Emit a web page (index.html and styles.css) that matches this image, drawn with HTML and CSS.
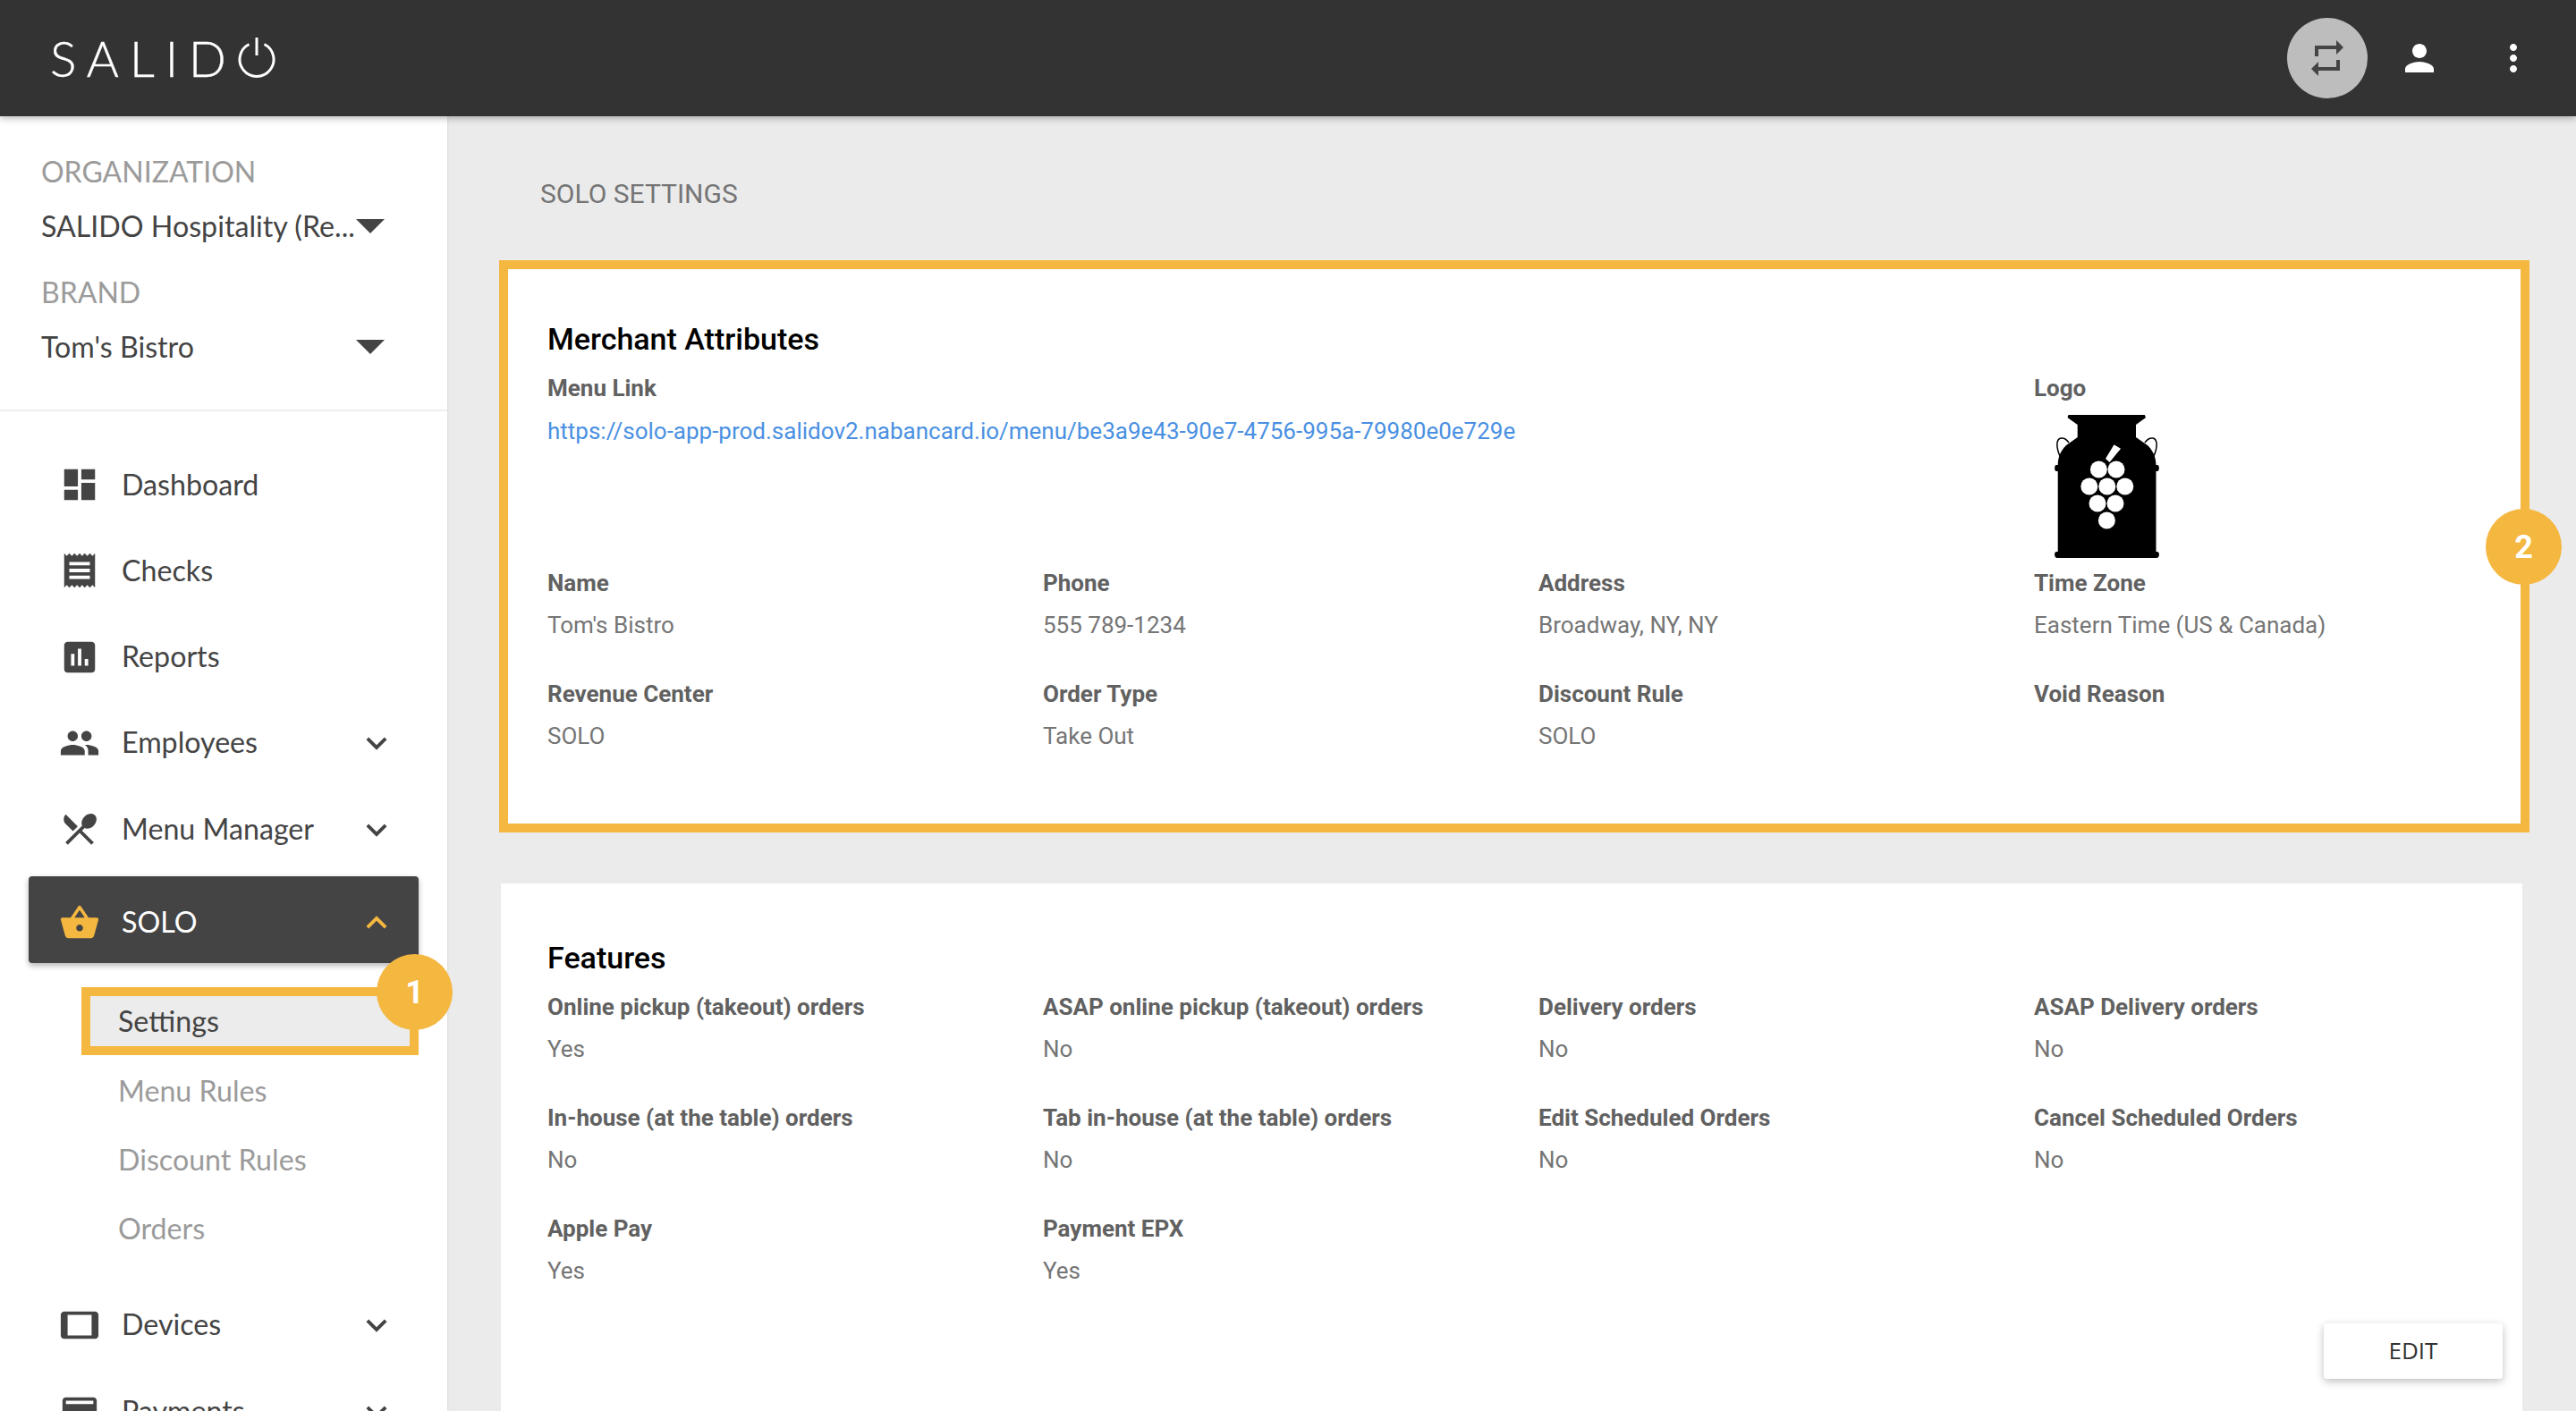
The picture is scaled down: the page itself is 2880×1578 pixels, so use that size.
FILE: index.html
```html
<!DOCTYPE html>
<html lang="en">
<head>
  <meta charset="UTF-8" />
  <meta name="viewport" content="width=device-width, initial-scale=1.0" />
  <title>SALIDO - Solo Settings</title>
  <link rel="stylesheet" href="styles.css">
</head>
<body>
<svg class="sprite" aria-hidden="true">
  <symbol id="i-chevron" viewBox="0 0 24 24"><path d="M16.59 8.59L12 13.17 7.41 8.59 6 10l6 6 6-6z"/></symbol>
</svg>
<header class="topbar">
  <div class="brand-logo">
    <span>SALID</span>
    <svg class="brand-power" viewBox="0 0 44 50"><path d="M13.500 11.500a19 19 0 1 0 17 0" fill="none" stroke="#fff" stroke-width="3"/><path d="M22 4v20" stroke="#fff" stroke-width="3"/></svg>
  </div>
  <div class="top-actions">
    <button class="top-btn swap"><svg viewBox="0 0 24 24"><path d="M7 7h10v3l4-4-4-4v3H5v6h2V7zm10 10H7v-3l-4 4 4 4v-3h12v-6h-2v4z"/></svg></button>
    <button class="top-btn"><svg viewBox="0 0 24 24"><path d="M12 12c2.21 0 4-1.79 4-4s-1.79-4-4-4-4 1.79-4 4 1.79 4 4 4zm0 2c-2.67 0-8 1.34-8 4v2h16v-2c0-2.66-5.33-4-8-4z"/></svg></button>
    <button class="top-btn more"><svg viewBox="0 0 24 24"><path d="M12 8c1.1 0 2-.9 2-2s-.9-2-2-2-2 .9-2 2 .9 2 2 2zm0 2c-1.1 0-2 .9-2 2s.9 2 2 2 2-.9 2-2-.9-2-2-2zm0 6c-1.1 0-2 .9-2 2s.9 2 2 2 2-.9 2-2-.9-2-2-2z"/></svg></button>
  </div>
</header>
<div class="layout">
  <aside class="sidebar">
    <div class="selectors">
      <div class="sel-label">ORGANIZATION</div>
      <div class="sel-value"><span>SALIDO Hospitality (Re...</span><i class="caret"></i></div>
      <div class="sel-label">BRAND</div>
      <div class="sel-value"><span>Tom's Bistro</span><i class="caret"></i></div>
    </div>
    <nav class="nav">
      <a class="nav-row"><svg class="nav-icon" viewBox="0 0 24 24"><path d="M3 13h8V3H3v10zm0 8h8v-6H3v6zm10 0h8V11h-8v10zm0-18v6h8V3h-8z"/></svg>Dashboard</a>
      <a class="nav-row"><svg class="nav-icon" viewBox="0 0 24 24"><path d="M18 17H6v-2h12v2zm0-4H6v-2h12v2zm0-4H6V7h12v2zM3 22l1.5-1.5L6 22l1.5-1.5L9 22l1.5-1.5L12 22l1.5-1.5L15 22l1.5-1.5L18 22l1.5-1.5L21 22V2l-1.5 1.5L18 2l-1.5 1.5L15 2l-1.5 1.5L12 2l-1.5 1.5L9 2 7.5 3.5 6 2 4.5 3.5 3 2v20z"/></svg>Checks</a>
      <a class="nav-row"><svg class="nav-icon" viewBox="0 0 24 24"><path d="M19 3H5c-1.1 0-2 .9-2 2v14c0 1.1.9 2 2 2h14c1.1 0 2-.9 2-2V5c0-1.1-.9-2-2-2zM9 17H7v-7h2v7zm4 0h-2V7h2v10zm4 0h-2v-4h2v4z"/></svg>Reports</a>
      <a class="nav-row"><svg class="nav-icon" viewBox="0 0 24 24"><path d="M16 11c1.66 0 2.99-1.34 2.99-3S17.66 5 16 5c-1.66 0-3 1.34-3 3s1.34 3 3 3zm-8 0c1.66 0 2.99-1.34 2.99-3S9.66 5 8 5C6.34 5 5 6.34 5 8s1.34 3 3 3zm0 2c-2.33 0-7 1.17-7 3.5V19h14v-2.5c0-2.33-4.67-3.5-7-3.5zm8 0c-.29 0-.62.02-.97.05 1.16.84 1.97 1.97 1.97 3.45V19h6v-2.5c0-2.33-4.67-3.5-7-3.5z"/></svg>Employees<svg class="chevron"><use href="#i-chevron"/></svg></a>
      <a class="nav-row"><svg class="nav-icon" viewBox="0 0 24 24"><path d="M8.1 13.34l2.83-2.83L3.91 3.5c-1.56 1.56-1.56 4.09 0 5.66l4.19 4.18zm6.78-1.81c1.53.71 3.68.21 5.27-1.38 1.91-1.91 2.28-4.65.81-6.12-1.46-1.46-4.2-1.1-6.12.81-1.59 1.59-2.09 3.74-1.38 5.27L3.7 19.87l1.41 1.41L12 14.41l6.88 6.88 1.41-1.41L13.41 13l1.47-1.47z"/></svg>Menu Manager<svg class="chevron"><use href="#i-chevron"/></svg></a>
      <a class="nav-row active"><svg class="nav-icon" viewBox="0 0 24 24"><path d="M17.21 9l-4.38-6.56c-.19-.28-.51-.42-.83-.42-.32 0-.64.14-.83.43L6.79 9H2c-.55 0-1 .45-1 1 0 .09.01.18.04.27l2.54 9.27c.23.84 1 1.46 1.92 1.46h13c.92 0 1.69-.62 1.93-1.46l2.54-9.27L23 10c0-.55-.45-1-1-1h-4.79zM9 9l3-4.4L15 9H9zm3 8c-1.1 0-2-.9-2-2s.9-2 2-2 2 .9 2 2-.9 2-2 2z"/></svg>SOLO<svg class="chevron up"><use href="#i-chevron"/></svg></a>
      <div class="subnav">
        <a class="sub-row current">Settings<span class="badge badge-one">1</span></a>
        <a class="sub-row">Menu Rules</a>
        <a class="sub-row">Discount Rules</a>
        <a class="sub-row">Orders</a>
      </div>
      <a class="nav-row"><svg class="nav-icon" viewBox="0 0 24 24"><path d="M21 4H3c-1.1 0-2 .9-2 2v12c0 1.1.89 2 2 2h18c1.1 0 1.99-.9 1.99-2L23 6c0-1.1-.9-2-2-2zm-2 14H5V6h14v12z"/></svg>Devices<svg class="chevron"><use href="#i-chevron"/></svg></a>
      <a class="nav-row"><svg class="nav-icon" viewBox="0 0 24 24"><path d="M20 4H4c-1.11 0-1.99.89-1.99 2L2 18c0 1.11.89 2 2 2h16c1.11 0 2-.89 2-2V6c0-1.11-.89-2-2-2zm0 14H4v-6h16v6zm0-10H4V6h16v2z"/></svg>Payments<svg class="chevron"><use href="#i-chevron"/></svg></a>
    </nav>
  </aside>
  <main class="main">
    <h1 class="page-title">SOLO SETTINGS</h1>
    <section class="card highlighted">
      <span class="badge badge-two">2</span>
      <h2>Merchant Attributes</h2>
      <div class="fields">
        <div class="field tall wide">
          <div class="label">Menu Link</div>
          <a class="value link">https://solo-app-prod.salidov2.nabancard.io/menu/be3a9e43-90e7-4756-995a-79980e0e729e</a>
        </div>
        <div class="field tall">
          <div class="label">Logo</div>
          <svg class="merchant-logo" viewBox="0 0 117 160">
            <path class="handle" d="M7 48C1 36 2 27 7 26c4-.5 7 2 9 5M110 48c6-12 5-21 0-22-4-.5-7 2-9 5"/>
            <path d="M15.500 0H100.800L102 3 91 11V25L104 34C110 40 113 46 113.500 56H115C117.500 56 117.500 63 115 63H113.500V153H115C117.500 153 118 160 114 160H3C-1 160 -.5 153 2 153H3.700V63H2C-.5 63-.5 56 2 56H3.700C4 46 7 40 13 34L25.700 25V11L14.500 3Z"/>
            <g class="grapes">
              <path d="M66.500 33.300L74 37.700 61.600 53 57 49Z"/>
              <ellipse cx="49.400" cy="61" rx="9.500" ry="9.500"/>
              <ellipse cx="69" cy="61" rx="9.500" ry="9.500"/>
              <ellipse cx="38.800" cy="80" rx="9.500" ry="9.500"/>
              <ellipse cx="58.800" cy="80" rx="9.500" ry="9.500"/>
              <ellipse cx="78.800" cy="80" rx="9.500" ry="9.500"/>
              <ellipse cx="48" cy="99" rx="9.500" ry="9.500"/>
              <ellipse cx="68" cy="99" rx="9.500" ry="9.500"/>
              <ellipse cx="58.400" cy="118" rx="9.500" ry="9.500"/>
            </g>
          </svg>
        </div>
        <div class="field"><div class="label">Name</div><div class="value">Tom's Bistro</div></div>
        <div class="field"><div class="label">Phone</div><div class="value">555 789-1234</div></div>
        <div class="field"><div class="label">Address</div><div class="value">Broadway, NY, NY</div></div>
        <div class="field"><div class="label">Time Zone</div><div class="value">Eastern Time (US &amp; Canada)</div></div>
        <div class="field"><div class="label">Revenue Center</div><div class="value">SOLO</div></div>
        <div class="field"><div class="label">Order Type</div><div class="value">Take Out</div></div>
        <div class="field"><div class="label">Discount Rule</div><div class="value">SOLO</div></div>
        <div class="field"><div class="label">Void Reason</div></div>
      </div>
    </section>
    <section class="card features">
      <h2>Features</h2>
      <div class="fields">
        <div class="field"><div class="label">Online pickup (takeout) orders</div><div class="value">Yes</div></div>
        <div class="field"><div class="label">ASAP online pickup (takeout) orders</div><div class="value">No</div></div>
        <div class="field"><div class="label">Delivery orders</div><div class="value">No</div></div>
        <div class="field"><div class="label">ASAP Delivery orders</div><div class="value">No</div></div>
        <div class="field"><div class="label">In-house (at the table) orders</div><div class="value">No</div></div>
        <div class="field"><div class="label">Tab in-house (at the table) orders</div><div class="value">No</div></div>
        <div class="field"><div class="label">Edit Scheduled Orders</div><div class="value">No</div></div>
        <div class="field"><div class="label">Cancel Scheduled Orders</div><div class="value">No</div></div>
        <div class="field"><div class="label">Apple Pay</div><div class="value">Yes</div></div>
        <div class="field"><div class="label">Payment EPX</div><div class="value">Yes</div></div>
      </div>
      <div class="card-actions"><button class="edit-btn">EDIT</button></div>
    </section>
  </main>
</div>
</body>
</html>
```

FILE: styles.css
```css
:root {
  --salido-yellow: #f4b740;
  --dark: #333333;
  --ink: #444444;
  --grey-bg: #ebebeb;
}
* {
  box-sizing: border-box;
}
html, body {
  margin: 0;
  padding: 0;
  height: 100%;
  overflow: hidden;
  background: var(--grey-bg);
  font-family: Roboto, sans-serif;
}
.sprite {
  display: none;
}

/* top bar */
.topbar {
  position: relative;
  z-index: 5;
  height: 130px;
  background: var(--dark);
  display: flex;
  align-items: center;
  justify-content: space-between;
  box-shadow: 0 2px 8px rgba(0,0,0,0.3);
}
.brand-logo {
  display: flex;
  align-items: center;
  margin-left: 56px;
  font-family: Lato, sans-serif;
  font-weight: 300;
  font-size: 55px;
  letter-spacing: 12px;
  color: #ffffff;
  -webkit-text-stroke: 0.4px #ffffff;
}
.brand-power {
  width: 44px;
  height: 50px;
  margin: -4px 0 0 0;
}
.top-actions {
  display: flex;
  align-items: center;
  margin-right: 46px;
}
.top-btn {
  width: 48px;
  height: 48px;
  padding: 0;
  border: none;
  background: none;
  margin-left: 34px;
}
.top-btn svg {
  width: 48px;
  height: 48px;
  fill: #ffffff;
  display: block;
}
.top-btn.more {
  margin-left: 57px;
}
.top-btn.swap {
  width: 90px;
  height: 90px;
  border-radius: 50%;
  background: #bdbdbd;
  padding: 21px;
}
.top-btn.swap svg {
  fill: var(--ink);
}

/* sidebar */
.layout {
  display: flex;
  height: calc(100vh - 130px);
}
.sidebar {
  width: 500px;
  flex-shrink: 0;
  background: #ffffff;
  font-family: Lato, sans-serif;
  position: relative;
  z-index: 2;
  box-shadow: 0 0 3px rgba(0,0,0,0.12);
}
.selectors {
  padding: 42px 42px 50px 46px;
  border-bottom: 2px solid #eeeeee;
}
.sel-label {
  font-size: 32px;
  line-height: 40px;
  color: #9b9b9b;
  margin-bottom: 21px;
}
.sel-value {
  display: flex;
  align-items: center;
  justify-content: space-between;
  font-size: 32.2px;
  line-height: 40px;
  color: var(--ink);
  margin-bottom: 34px;
}
.sel-value:last-child {
  margin-bottom: 0;
}
.caret {
  width: 0;
  height: 0;
  margin-right: 28px;
  border-left: 16px solid transparent;
  border-right: 16px solid transparent;
  border-top: 16px solid var(--ink);
}
.nav {
  padding-top: 34px;
}
.nav-row {
  display: flex;
  align-items: center;
  height: 96.25px;
  padding: 0 56px 2px 66px;
  font-size: 32.2px;
  color: var(--ink);
}
.nav-icon {
  width: 46px;
  height: 46px;
  fill: var(--ink);
  margin: 2px 24px 0 0;
  flex-shrink: 0;
}
.chevron {
  width: 46px;
  height: 46px;
  margin: 3px 0 0 auto;
  fill: var(--ink);
}
.nav-row.active {
  margin: 5px 32px 0;
  height: 97px;
  padding: 4px 24px 0 34px;
  background: var(--ink);
  color: #ffffff;
  border-radius: 4px;
  box-shadow: 0 3px 6px rgba(0,0,0,0.3);
}
.active .nav-icon, .active .chevron {
  fill: var(--salido-yellow);
}
.chevron.up {
  transform: rotate(180deg);
}
.subnav {
  margin: 27px 32px 21px 91px;
}
.sub-row {
  display: flex;
  align-items: center;
  height: 77px;
  padding: 0 0 2px 41px;
  font-size: 32.2px;
  color: #9b9b9b;
}
.sub-row.current {
  position: relative;
  height: 76px;
  margin-bottom: 1.5px;
  padding: 0 0 2px 31px;
  background: #ececec;
  border: 10px solid var(--salido-yellow);
  color: var(--ink);
}
.badge {
  position: absolute;
  width: 85px;
  height: 85px;
  border-radius: 50%;
  background: var(--salido-yellow);
  color: #ffffff;
  font-family: Roboto, sans-serif;
  font-weight: 700;
  font-size: 36px;
  display: flex;
  align-items: center;
  justify-content: center;
  z-index: 3;
}
.badge-one {
  top: -47px;
  right: -48px;
}
.badge-two {
  top: 268px;
  right: -46px;
}

/* content */
.main {
  flex: 1;
  padding-left: 58px;
  min-width: 0;
}
.page-title {
  margin: 0 0 0 46px;
  padding-top: 69px;
  height: 161px;
  font-size: 30px;
  line-height: 36px;
  font-weight: 400;
  color: #757575;
}
.card {
  position: relative;
  width: 2260px;
  margin-left: 2px;
  background: #ffffff;
  padding: 61px 22px 0 52px;
}
.card.highlighted {
  width: 2270px;
  margin-left: 0;
  padding: 56px 0 37px 44px;
  border: 10px solid var(--salido-yellow);
  margin-bottom: 57px;
}
.features {
  height: 800px;
}
.card h2 {
  margin: 0 0 17px;
  font-size: 34px;
  line-height: 44px;
  font-weight: 500;
  color: #000000;
}
.fields {
  display: grid;
  grid-template-columns: repeat(4, 554px);
}
.field {
  height: 124px;
}
.field.tall {
  height: 218px;
}
.field.wide {
  grid-column: span 3;
}
.label {
  font-size: 26px;
  line-height: 32px;
  font-weight: 700;
  color: #616161;
}
.value {
  display: block;
  margin-top: 15px;
  font-size: 26px;
  line-height: 32px;
  color: #757575;
}
.link {
  margin-top: 16px;
  color: #4a90e2;
}
.merchant-logo {
  display: block;
  width: 117px;
  height: 160px;
  margin: 14px 0 0 23px;
}
.handle {
  fill: none;
  stroke: #000000;
  stroke-width: 1.500;
}
.grapes {
  fill: #ffffff;
}
.card-actions {
  display: flex;
  justify-content: flex-end;
  margin-top: -2px;
}
.edit-btn {
  width: 200px;
  height: 62px;
  padding: 0 0 2px;
  border: none;
  border-radius: 4px;
  background: #ffffff;
  font-family: "Open Sans", sans-serif;
  font-size: 26px;
  color: var(--dark);
  box-shadow: 0 3px 10px rgba(0,0,0,0.25);
}
```
